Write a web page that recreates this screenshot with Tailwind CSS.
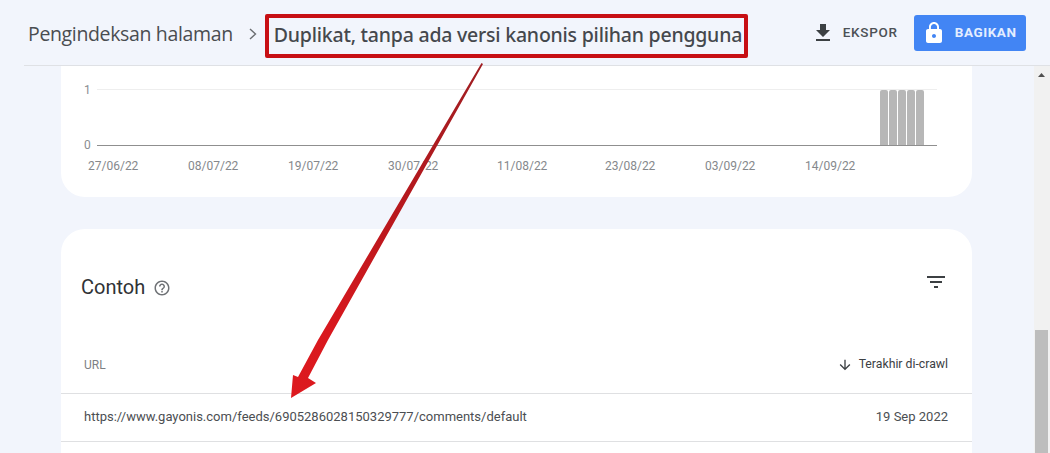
<!DOCTYPE html>
<html lang="id">
<head>
  <meta charset="utf-8"/>
  <meta name="viewport" content="width=device-width, initial-scale=1.0"/>
  <title>Pengindeksan halaman</title>
  <script src="https://cdn.jsdelivr.net/npm/@tailwindcss/browser@4"></script>
</head>
<body class="bg-[#f2f5fc] font-['Roboto',sans-serif] overflow-hidden">
  <div class="relative w-[1050px] h-[453px] overflow-hidden flex flex-col">
    <!-- Header -->
    <header class="h-[66px] ml-6 border-b border-[#dfe1e5] flex items-center shrink-0">
      <span class="ml-1 mt-[3px] text-[19.5px] text-[#4a4d51] font-['Open_Sans',sans-serif] tracking-[-0.35px] whitespace-nowrap">Pengindeksan halaman</span>
      <svg class="ml-[15px] mt-[3px] w-[10px] h-[12px]" viewBox="0 0 10 12" fill="none" stroke="#6a6d71" stroke-width="1.4"><path d="M2 1l5.500 5L2 11"/></svg>
      <span class="ml-[7px] mt-[7px] h-[44px] w-[483px] border-[4px] border-[#c70f14] rounded-[2px] flex items-center pl-[5px] pb-[2px] text-[19.5px] font-medium text-[#45484d] font-['Noto_Sans',sans-serif] tracking-[-0.22px] whitespace-nowrap">Duplikat, tanpa ada versi kanonis pilihan pengguna</span>
      <svg class="ml-[63px] w-[24px] h-[24px]" viewBox="0 0 24 24" fill="#3c4043"><path d="M19 9h-4V3H9v6H5l7 7 7-7zM5 18v2h14v-2H5z"/></svg>
      <span class="ml-[8px] w-[55px] text-[13.5px] font-medium text-[#4d5156] tracking-[0.7px] whitespace-nowrap">EKSPOR</span>
      <button class="ml-[16px] h-[36px] w-[112px] bg-[#4285f4] rounded-[3px] flex items-center text-white">
        <svg class="ml-[8px] w-[24px] h-[24px]" viewBox="0 0 24 24" fill="#fff"><path d="M18 8h-1V6c0-2.760-2.240-5-5-5S7 3.240 7 6v2H6c-1.100 0-2 .9-2 2v10c0 1.100.9 2 2 2h12c1.100 0 2-.9 2-2V10c0-1.100-.9-2-2-2zm-6 9c-1.100 0-2-.9-2-2s.9-2 2-2 2 .9 2 2-.9 2-2 2zm3.100-9H8.900V6c0-1.710 1.390-3.100 3.100-3.100 1.710 0 3.100 1.390 3.100 3.100v2z"/></svg>
        <span class="ml-[9px] text-[13.5px] font-bold tracking-[0.55px] text-[#e4eeff] whitespace-nowrap">BAGIKAN</span>
      </button>
    </header>

    <div class="flex flex-1 min-h-0">
      <main class="flex-1 pl-[61px] pr-[62px]">
        <!-- Chart card -->
        <section class="h-[131px] bg-white rounded-b-[24px] pl-[23px] pr-[35px] pt-[15px]">
          <div class="flex">
            <div class="w-[13px] h-[72px] pt-px flex flex-col justify-between text-[12px] leading-[16px] text-[#8a8d91]">
              <span>1</span>
              <span>0</span>
            </div>
            <div class="flex-1 mt-[8px] h-[57px] border-t border-t-[#eeeeee] border-b border-b-[#8f8f8f] flex justify-end items-stretch pr-[13px]">
              <div class="flex gap-px">
                <div class="w-[8px] bg-[#b7b7b7] rounded-t-[2px]"></div>
                <div class="w-[8px] bg-[#b7b7b7] rounded-t-[2px]"></div>
                <div class="w-[8px] bg-[#b7b7b7] rounded-t-[2px]"></div>
                <div class="w-[8px] bg-[#b7b7b7] rounded-t-[2px]"></div>
                <div class="w-[8px] bg-[#b7b7b7] rounded-t-[2px]"></div>
              </div>
            </div>
          </div>
          <div class="flex text-[12px] text-[#85888c] mt-[4px] ml-[4px]">
            <span class="w-[100px]">27/06/22</span>
            <span class="w-[100px]">08/07/22</span>
            <span class="w-[100px]">19/07/22</span>
            <span class="w-[109px]">30/07/22</span>
            <span class="w-[108px]">11/08/22</span>
            <span class="w-[100px]">23/08/22</span>
            <span class="w-[100px]">03/09/22</span>
            <span>14/09/22</span>
          </div>
        </section>

        <!-- Examples card -->
        <section class="mt-[32px] h-[300px] bg-white rounded-t-[24px]">
          <div class="h-[115px] pl-[20px] pr-[24px] flex items-start justify-between">
            <div class="flex items-center mt-[43px]">
              <h2 class="text-[20px] text-[#303235]">Contoh</h2>
              <svg class="ml-[8px] w-[18px] h-[18px] mt-[2px]" viewBox="0 0 24 24" fill="#6f7276"><path d="M11 18h2v-2h-2v2zm1-16C6.480 2 2 6.480 2 12s4.480 10 10 10 10-4.480 10-10S17.520 2 12 2zm0 18c-4.410 0-8-3.590-8-8s3.590-8 8-8 8 3.590 8 8-3.590 8-8 8zm0-14c-2.210 0-4 1.790-4 4h2c0-1.100.9-2 2-2s2 .9 2 2c0 2-3 1.750-3 5h2c0-2.250 3-2.500 3-5 0-2.210-1.790-4-4-4z"/></svg>
            </div>
            <svg class="mt-[41px] w-[24px] h-[24px]" viewBox="0 0 24 24" fill="#3c4043"><path d="M10 18h4v-2h-4v2zM3 6v2h18V6H3zm3 7h12v-2H6v2z"/></svg>
          </div>
          <div class="h-[50px] pl-[23px] pr-[24px] border-b border-[#dfe0e2] flex items-center justify-between text-[12px] pb-[8px]">
            <span class="text-[#7d8084]">URL</span>
            <span class="flex items-center text-[12.25px] text-[#3c4043]">
              <svg class="w-[16px] h-[16px] mr-[6px]" viewBox="0 0 24 24" fill="#3c4043"><path d="M20 12l-1.410-1.410L13 16.170V4h-2v12.170l-5.580-5.590L4 12l8 8 8-8z"/></svg>
              Terakhir di-crawl
            </span>
          </div>
          <div class="h-[48px] pl-[23px] pr-[24px] pb-[2px] border-b border-[#dfe0e2] flex items-center justify-between text-[13px] text-[#4b4e52]">
            <span>https://www.gayonis.com/feeds/6905286028150329777/comments/default</span>
            <span>19 Sep 2022</span>
          </div>
        </section>
      </main>

      <!-- Scrollbar -->
      <div class="w-[16px] shrink-0 bg-[#f1f1f1] flex flex-col pl-px pr-[2px]">
        <svg class="mt-[5px] w-[13px] h-[8px]" viewBox="0 0 13 8" fill="#505050"><path d="M6.500 2l3.500 4H3z"/></svg>
        <div class="mt-[251px] flex-1 bg-[#bdbdbd]"></div>
      </div>
    </div>

    <!-- Red annotation arrow -->
    <svg class="absolute left-0 top-0 pointer-events-none" width="1050" height="453" viewBox="0 0 1050 453">
      <defs>
        <linearGradient id="arrowRed" x1="482" y1="63" x2="291" y2="399" gradientUnits="userSpaceOnUse">
          <stop offset="0" stop-color="#a01e22"/>
          <stop offset="0.45" stop-color="#b8181d"/>
          <stop offset="0.8" stop-color="#d9181e"/>
          <stop offset="1" stop-color="#dd1a1f"/>
        </linearGradient>
      </defs>
      <path d="M481.500 63 L483 64 L328 340 L308 378 L316 383 L291 398 L293 375 L298 377 L318 340 Z" fill="url(#arrowRed)"/>
    </svg>
  </div>
</body>
</html>
